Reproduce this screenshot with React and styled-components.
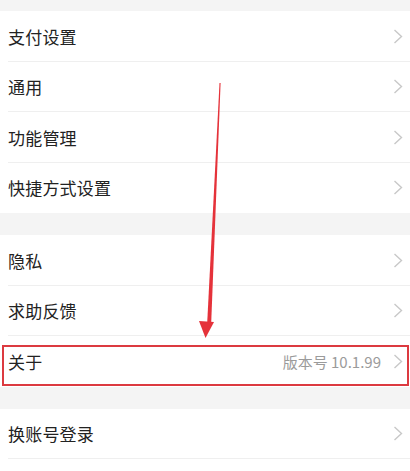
import React from "react";
import styled, { createGlobalStyle } from "styled-components";

const GlobalStyle = createGlobalStyle`
  html, body {
    margin: 0;
    padding: 0;
    background: #f4f4f4;
  }
  body {
    font-family: "Noto Sans CJK SC", "Noto Sans", sans-serif;
  }
`;

const Page = styled.div`
  position: relative;
  width: 410px;
  height: 471px;
  overflow: hidden;
  background: #f4f4f4;
  padding-top: 11px;
  box-sizing: border-box;
  display: flex;
  flex-direction: column;
`;

const Section = styled.div`
  background: #ffffff;
  margin-bottom: ${(p) => (p.$fill ? "0" : "22px")};
  flex: ${(p) => (p.$fill ? "1" : "none")};
`;

const Row = styled.div`
  position: relative;
  height: 50.5px;
  display: flex;
  align-items: center;
  padding: 0 7px 0 8px;
  box-sizing: border-box;

  &::after {
    content: "";
    display: ${(p) => (p.$last ? "none" : "block")};
    position: absolute;
    left: 8px;
    right: 0;
    bottom: 0;
    height: 1px;
    background: #efefef;
  }
`;

const Label = styled.span`
  flex: 1;
  font-size: 17px;
  color: #222222;
  letter-spacing: 0.2px;
`;

const Value = styled.span`
  font-size: 15px;
  color: #9b9b9b;
  margin-right: 12px;
`;

const Highlight = styled.div`
  position: absolute;
  left: 2px;
  right: 1px;
  top: 9px;
  bottom: 1px;
  border: 2px solid #dc3a40;
  pointer-events: none;
`;

const Overlay = styled.svg`
  position: absolute;
  left: 0;
  top: 0;
  pointer-events: none;
`;

const Chevron = () => (
  <svg width="10" height="15" viewBox="0 0 10 15">
    <path d="M1.5 1 L8.5 7.5 L1.5 14" fill="none" stroke="#c8c8c8" strokeWidth="1.4" />
  </svg>
);

const groups = [
  [{ label: "支付设置" }, { label: "通用" }, { label: "功能管理" }, { label: "快捷方式设置" }],
  [{ label: "隐私" }, { label: "求助反馈" }, { label: "关于", value: "版本号 10.1.99", marked: true }],
  [{ label: "换账号登录", open: true }],
];

export default function App() {
  return (
    <>
      <GlobalStyle />
      <Page>
        {groups.map((items, gi) => (
          <Section key={gi} $fill={gi === groups.length - 1}>
            {items.map((item, i) => (
              <Row key={item.label} $last={i === items.length - 1 && !item.open}>
                <Label>{item.label}</Label>
                {item.value && <Value>{item.value}</Value>}
                <Chevron />
                {item.marked && <Highlight />}
              </Row>
            ))}
          </Section>
        ))}
        <Overlay width="410" height="471" viewBox="0 0 410 471">
          <polygon points="219.5,83 220.6,83 211.2,323 207.2,323" fill="#e5323a" />
          <polygon points="199,321 214,322 205.5,338" fill="#e5323a" />
        </Overlay>
      </Page>
    </>
  );
}
